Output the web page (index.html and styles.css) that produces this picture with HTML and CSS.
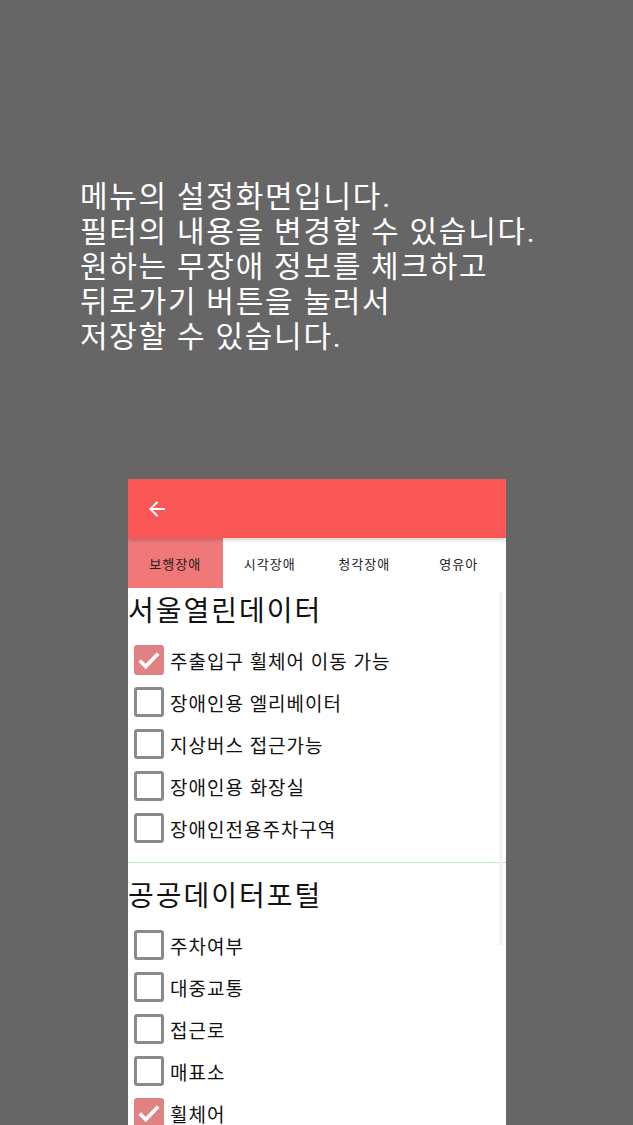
FILE: index.html
```html
<!DOCTYPE html>
<html lang="ko">
<head>
  <meta charset="UTF-8">
  <title>설정 안내</title>
  <meta name="viewport" content="width=device-width, initial-scale=1.0">
  <link rel="stylesheet" href="styles.css">
</head>
<body>
<div id="guide">
  <p class="guide-text">메뉴의 설정화면입니다.<br>필터의 내용을 변경할 수 있습니다.<br>원하는 무장애 정보를 체크하고<br>뒤로가기 버튼을 눌러서<br>저장할 수 있습니다.</p>
</div>
<div id="phone">
  <div class="appbar">
    <svg class="back" viewBox="0 0 24 24" width="24" height="24"><path fill="#fff" d="M20 11H7.83l5.59-5.59L12 4l-8 8 8 8 1.41-1.41L7.83 13H20v-2z"/></svg>
  </div>
  <div class="tabs">
    <div class="tab active">보행장애</div>
    <div class="tab">시각장애</div>
    <div class="tab">청각장애</div>
    <div class="tab">영유아</div>
  </div>
  <div class="list">
    <div class="scrollbar"></div>
    <div class="section first">
      <div class="section-title">서울열린데이터</div>
      <div class="row"><span class="box checked"><svg viewBox="0 0 24 24" width="26" height="26"><path fill="none" stroke="#fff" stroke-width="3.4" d="M3.5 12.5l5.5 5.5L20.5 6"/></svg></span>주출입구 휠체어 이동 가능</div>
      <div class="row"><span class="box"></span>장애인용 엘리베이터</div>
      <div class="row"><span class="box"></span>지상버스 접근가능</div>
      <div class="row"><span class="box"></span>장애인용 화장실</div>
      <div class="row"><span class="box"></span>장애인전용주차구역</div>
    </div>
    <div class="section second">
      <div class="section-title">공공데이터포털</div>
      <div class="row"><span class="box"></span>주차여부</div>
      <div class="row"><span class="box"></span>대중교통</div>
      <div class="row"><span class="box"></span>접근로</div>
      <div class="row"><span class="box"></span>매표소</div>
      <div class="row"><span class="box checked"><svg viewBox="0 0 24 24" width="26" height="26"><path fill="none" stroke="#fff" stroke-width="3.4" d="M3.5 12.5l5.5 5.5L20.5 6"/></svg></span>휠체어</div>
    </div>
  </div>
</div>
</body>
</html>
```

FILE: styles.css
```css
body, html {
  margin: 0;
  padding: 0;
  height: 100%;
  font-family: Roboto, "Noto Sans CJK KR", sans-serif;
  background-color: #666666;
  overflow: hidden;
}
#guide {
  padding: 179px 0 0 80px;
  height: 479px;
  box-sizing: border-box;
}
.guide-text {
  margin: 0;
  color: #ffffff;
  font-size: 30px;
  line-height: 35px;
  letter-spacing: 1.7px;
}
#phone {
  margin-left: 128px;
  width: 378px;
  height: 646px;
  background: #ffffff;
  overflow: hidden;
}
.appbar {
  height: 59px;
  background: #fa5656;
  display: flex;
  align-items: center;
  padding-left: 17px;
  position: relative;
  z-index: 1;
  box-shadow: 0 2px 4px rgba(0, 0, 0, 0.18);
}
.back {
  display: block;
}
.tabs {
  display: flex;
  height: 50px;
}
.tab {
  flex: 1;
  display: flex;
  align-items: center;
  justify-content: center;
  font-size: 13px;
  letter-spacing: 1px;
  color: #222222;
}
.tab.active {
  background: #f07878;
}
.list {
  position: relative;
}
.scrollbar {
  position: absolute;
  top: 4px;
  right: 3px;
  width: 4px;
  height: 353px;
  background: #f3f3f3;
}
.section {
  padding-bottom: 13px;
}
.section.first {
  padding-top: 4px;
  border-bottom: 1px solid #bfe8bf;
}
.section.second {
  padding-top: 14px;
}
.section-title {
  font-size: 28px;
  line-height: 40px;
  letter-spacing: 2px;
  color: #111111;
  margin-bottom: 7px;
}
.row {
  height: 42px;
  display: flex;
  align-items: center;
  font-size: 19px;
  letter-spacing: 1px;
  color: #111111;
}
.box {
  width: 30px;
  height: 30px;
  box-sizing: border-box;
  border: 3px solid #8a8a8a;
  border-radius: 3px;
  margin: 0 6px 0 6px;
  display: flex;
  align-items: center;
  justify-content: center;
}
.box.checked {
  background: #e08282;
  border-color: #e08282;
}
.box svg {
  display: block;
  flex-shrink: 0;
}
```
